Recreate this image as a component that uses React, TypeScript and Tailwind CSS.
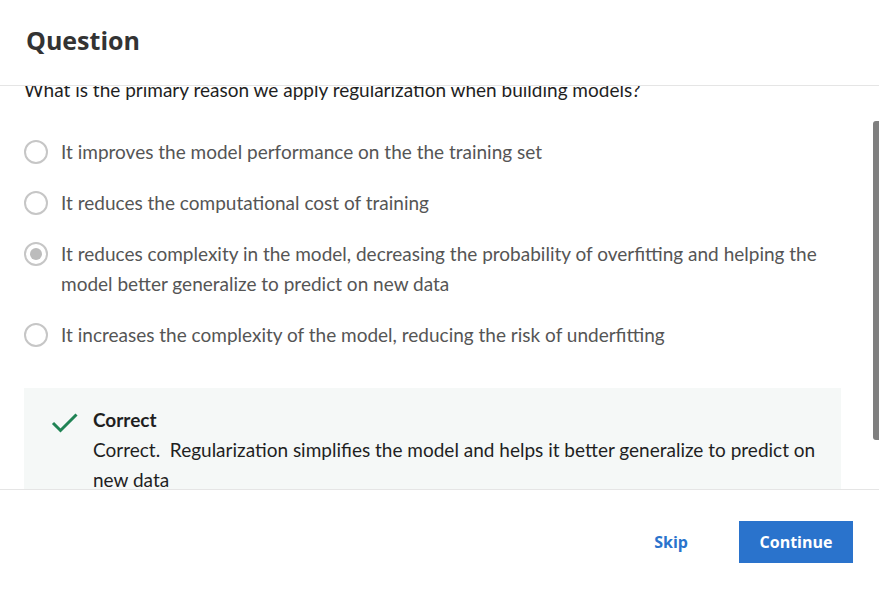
import React from "react";

const options = [
  "It improves the model performance on the the training set",
  "It reduces the computational cost of training",
  "It reduces complexity in the model, decreasing the probability of overfitting and helping the model better generalize to predict on new data",
  "It increases the complexity of the model, reducing the risk of underfitting",
];

const selected = 2;

function Radio({ checked }: { checked: boolean }) {
  return (
    <span className="mt-[3px] flex size-[24px] shrink-0 items-center justify-center rounded-full border-2 border-[#c6c6c6] bg-white">
      {checked && <span className="size-[12px] rounded-full bg-[#bcbcbc]" />}
    </span>
  );
}

export default function App() {
  return (
    <div className="flex h-[591px] w-[879px] flex-col bg-white font-['Lato',sans-serif]">
      {/* header */}
      <div className="flex h-[86px] shrink-0 items-center border-b border-[#e5e5e5] px-[26px] pb-[4px]">
        <h1 className="font-['Open_Sans',sans-serif] text-[25px] font-bold text-[#333]">
          Question
        </h1>
      </div>

      {/* scrolled body */}
      <div className="relative flex-1 overflow-hidden">
        <div className="-mt-[11px] pl-[24px] pr-[38px]">
          <p className="text-[19px] leading-[30px] text-[#1f1f1f]">
            What is the primary reason we apply regularization when building models?
          </p>

          <div className="mt-[32px] flex flex-col gap-[21px]">
            {options.map((o, i) => (
              <label key={i} className="flex gap-[13px]">
                <Radio checked={i === selected} />
                <span className="text-[19px] leading-[30px] text-[#555]">{o}</span>
              </label>
            ))}
          </div>

          <div className="mt-[38px] flex gap-[15px] bg-[#f5f8f7] pl-[27px] pr-[16px] pt-[17px] pb-[20px]">
            <svg className="mt-[4px] size-[27px] shrink-0" viewBox="0 0 27 22" fill="none">
              <path d="M2 11.5 L9.5 19 L25.5 3" stroke="#1f8354" strokeWidth="3" />
            </svg>
            <div className="text-[19px] leading-[30px] text-[#1f1f1f]">
              <div className="font-bold">Correct</div>
              <div>Correct.&nbsp; Regularization simplifies the model and helps it better generalize to predict on new data</div>
            </div>
          </div>
        </div>

        {/* scrollbar thumb */}
        <div className="absolute right-0 top-[35px] h-[319px] w-[6px] rounded-l-[3px] bg-[#7f7f7f]" />
      </div>

      {/* footer */}
      <div className="flex h-[102px] shrink-0 items-center justify-end gap-[31px] border-t border-[#e5e5e5] pr-[26px] pt-[2px]">
        <button className="px-[20px] py-[8px] font-['Open_Sans',sans-serif] text-[16px] font-bold text-[#2a73cc]">
          Skip
        </button>
        <button className="h-[42px] w-[114px] bg-[#2a73cc] font-['Open_Sans',sans-serif] text-[16px] font-bold text-white">
          Continue
        </button>
      </div>
    </div>
  );
}
